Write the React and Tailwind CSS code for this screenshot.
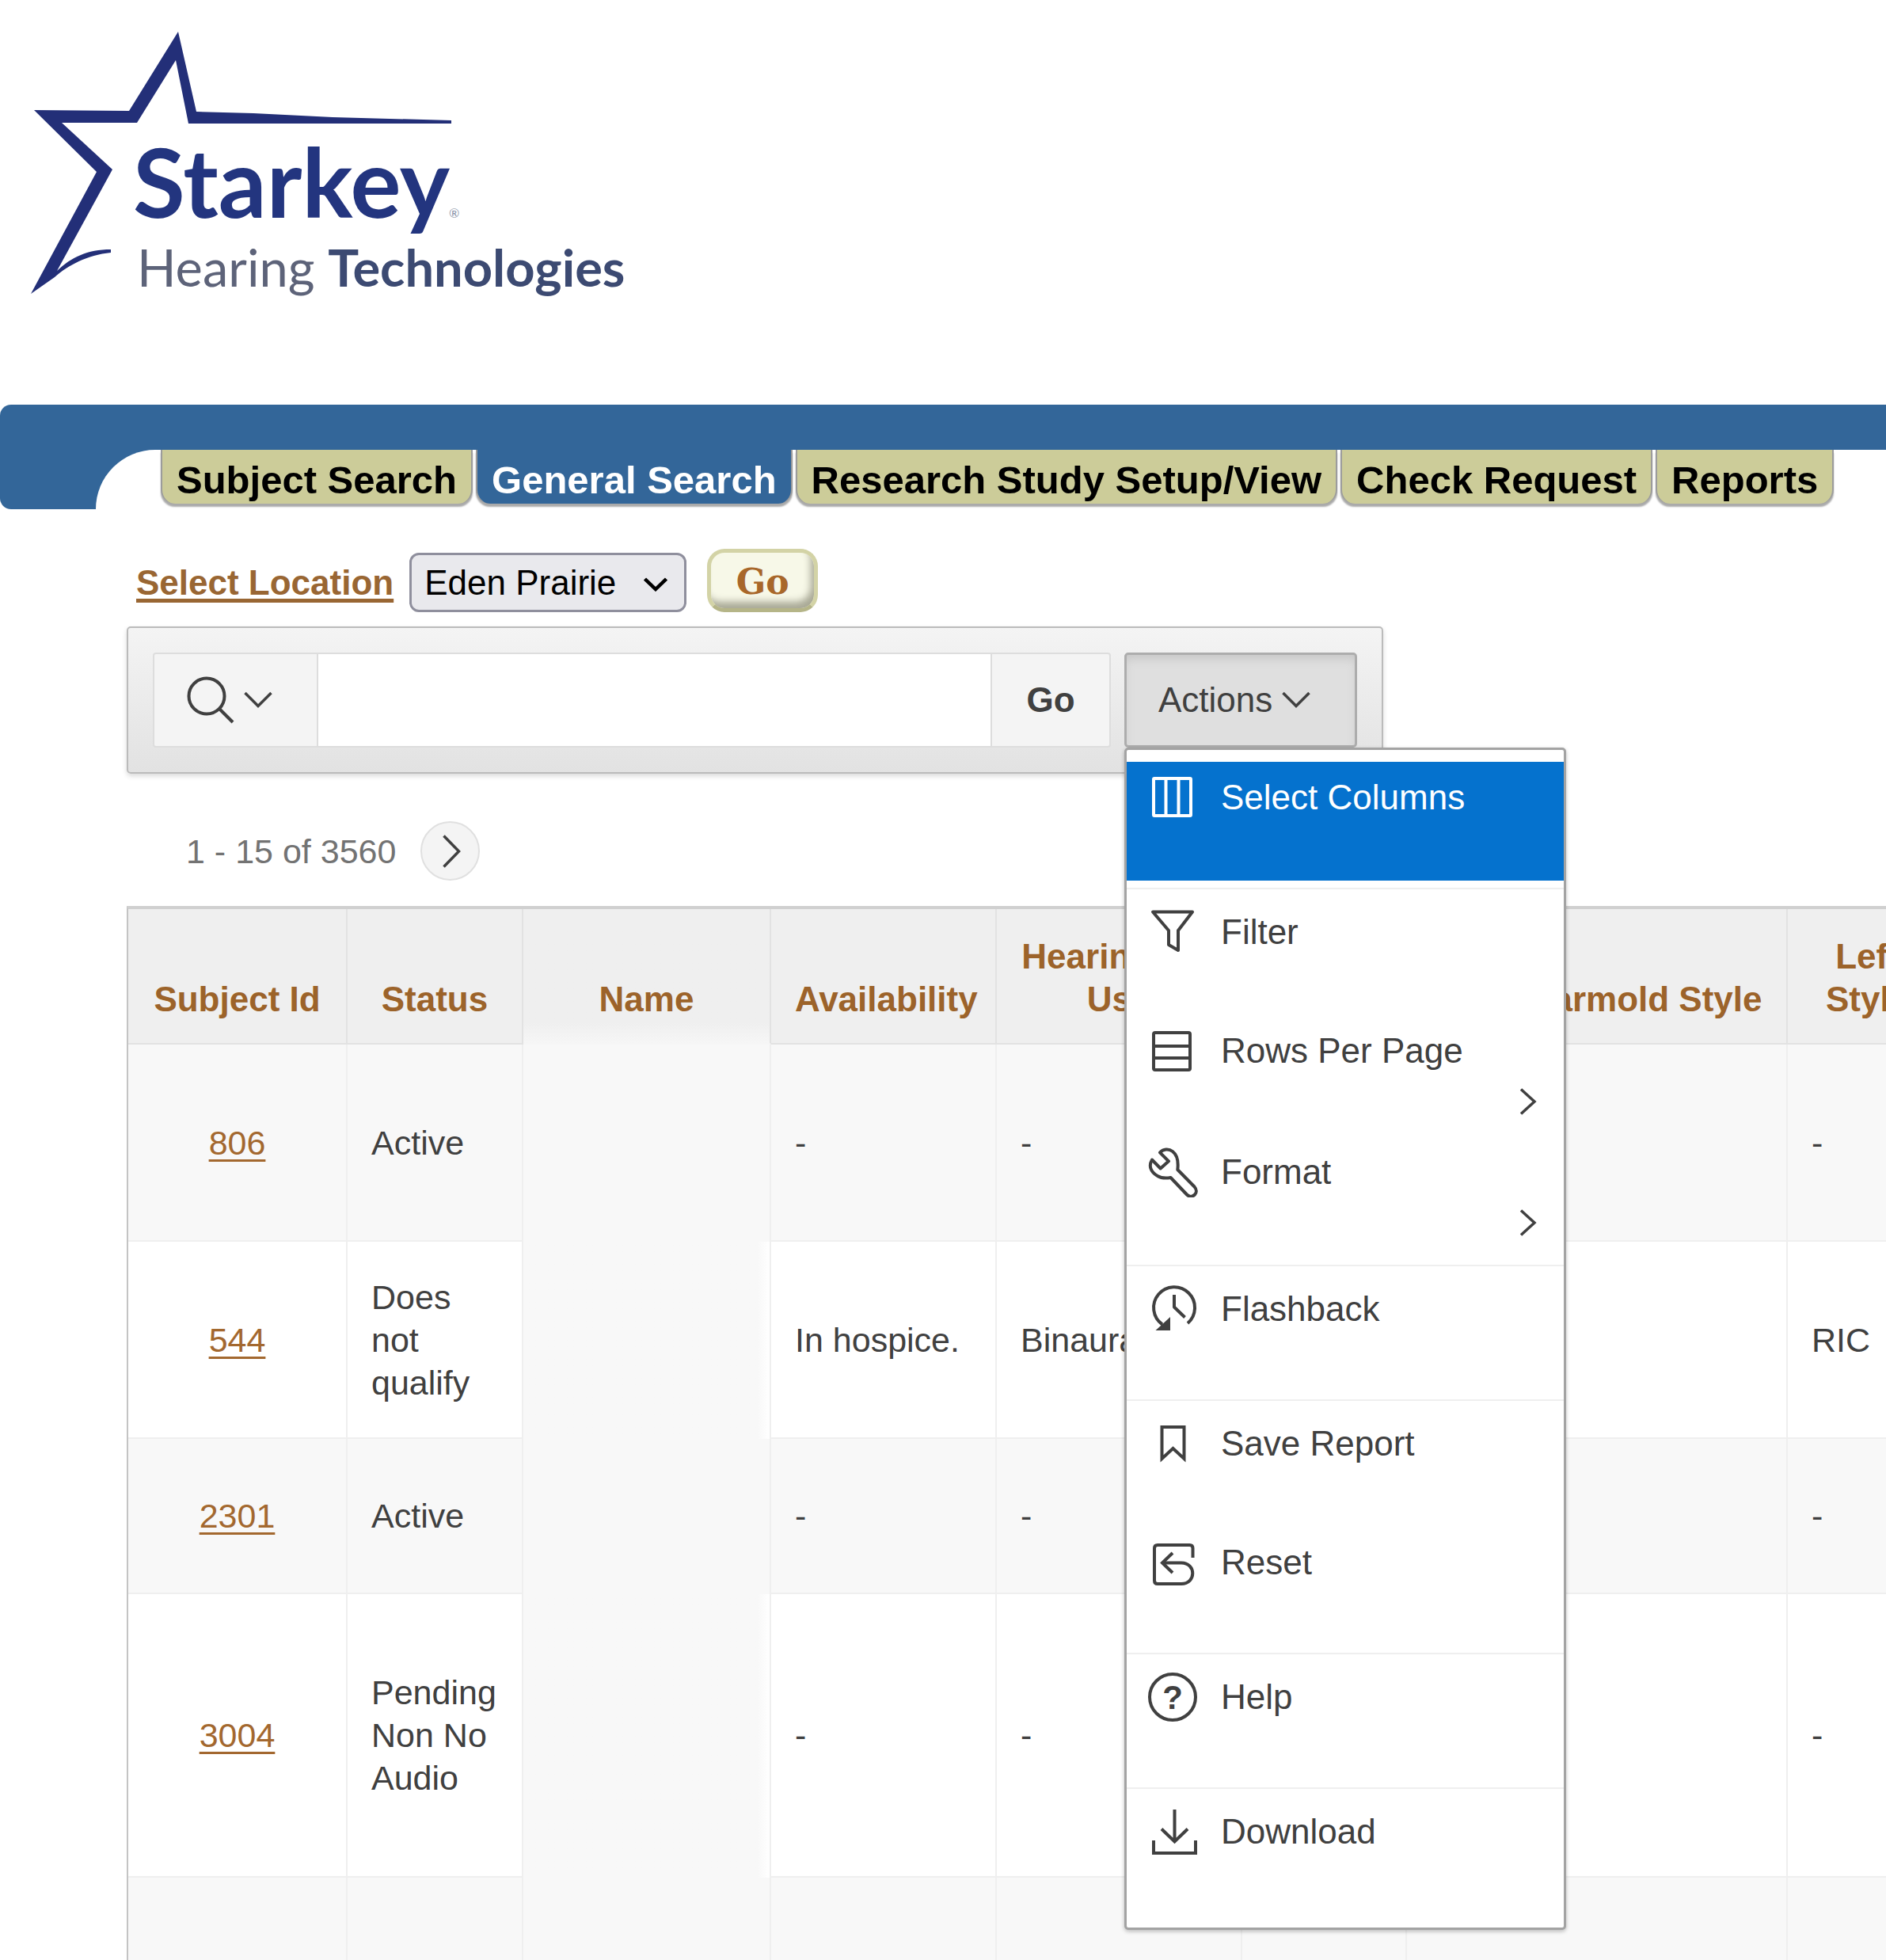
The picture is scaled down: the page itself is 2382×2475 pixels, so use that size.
import React from "react";

const TABS = [
  { label: "Subject Search" },
  { label: "General Search", current: true },
  { label: "Research Study Setup/View" },
  { label: "Check Request" },
  { label: "Reports" },
];

const COLUMNS = [
  { key: "id", label: "Subject Id", col: "w-[277px]" },
  { key: "status", label: "Status", col: "w-[222px]" },
  { key: "name", label: "Name", col: "w-[313px]" },
  { key: "availability", label: "Availability", col: "w-[285px]" },
  { key: "use", label: "Hearing Aid Use", col: "w-[310px]" },
  { key: "side", label: "", col: "w-[208px]" },
  { key: "right", label: "Right Earmold Style", col: "w-[481px]" },
  { key: "left", label: "Left Style", col: "w-[203px]" },
];

const ROWS = [
  { id: "806", status: "Active", availability: "-", use: "-", left: "-", height: "h-[249px]" },
  { id: "544", status: "Does not qualify", availability: "In hospice.", use: "Binaural", left: "RIC", height: "h-[249px]" },
  { id: "2301", status: "Active", availability: "-", use: "-", left: "-", height: "h-[196px]" },
  { id: "3004", status: "Pending Non No Audio", availability: "-", use: "-", left: "-", height: "h-[358px]" },
  { id: "", status: "", availability: "", use: "", left: "", height: "h-[106px]" },
];

function Chevron({ d, className, viewBox }) {
  return (
    <svg viewBox={viewBox} className={className} fill="none" stroke="currentColor" strokeWidth="3.5" aria-hidden="true">
      <path d={d} />
    </svg>
  );
}

function Down({ className = "h-[22px] w-9" }) {
  return <Chevron viewBox="0 0 36 22" d="M1.5 2 18 18.500 34.500 2" className={className} />;
}

function MenuIcon({ children }) {
  return (
    <svg
      viewBox="0 0 64 64"
      className="h-16 w-16 shrink-0"
      fill="none"
      stroke="currentColor"
      strokeWidth="4"
      strokeLinejoin="round"
      aria-hidden="true"
    >
      {children}
    </svg>
  );
}

const ICONS = {
  columns: (
    <>
      <rect x="8" y="8" width="47" height="47" rx="1" />
      <path d="M23.500 8V55M39.500 8V55" />
    </>
  ),
  filter: <path d="M7 6.500H57L39 30V55L27 48V30Z" />,
  rows: (
    <>
      <rect x="8" y="9" width="46" height="47" rx="2" />
      <path d="M8 26H54M8 41H54" />
    </>
  ),
  wrench: (
    <path d="M6 16.500 16.700 27.500 27 18.300 16 7.300C20 3 27 2 32 6 38.500 11 39.500 19 38.300 29L59.500 50.500C62.500 54 62.500 58 60 60.500 57 63.500 53 63.500 50 60.500L29.500 39C24 40 18 40 13 37 4 32 1.500 24 6 16.500Z" />
  ),
  flashback: (
    <>
      <path d="M19 51.500A26 26 0 1 1 51 50" />
      <path d="M34 14V29.500L47.500 42.500" />
      <path d="M10.500 59H29V42Z" fill="currentColor" stroke="none" />
    </>
  ),
  bookmark: <path d="M18.500 11H46.500V51L32.500 38 18.500 51Z" strokeLinejoin="miter" />,
  reset: (
    <>
      <path d="M57.500 26V14Q57.500 10 53.500 10H13Q9 10 9 14V55Q9 59 13 59H43C62 59 62 32.500 43 32.500H19" />
      <path d="M32 20 19 32.500 32 45" strokeLinejoin="miter" />
    </>
  ),
  help: (
    <>
      <circle cx="32" cy="32" r="29" />
      <text
        x="32"
        y="47"
        textAnchor="middle"
        fill="currentColor"
        stroke="none"
        className="font-['Liberation_Sans',sans-serif] text-[42px] font-bold"
      >
        ?
      </text>
    </>
  ),
  download: (
    <>
      <path d="M8 43V59H61V43" strokeLinejoin="miter" />
      <path d="M34.500 4V44M18 28.500 34.500 44.500 51 28.500" strokeLinejoin="miter" />
    </>
  ),
};

const MENU = [
  [{ label: "Select Columns", icon: "columns", active: true }],
  [
    { label: "Filter", icon: "filter" },
    { label: "Rows Per Page", icon: "rows", sub: true },
    { label: "Format", icon: "wrench", sub: true },
  ],
  [{ label: "Flashback", icon: "flashback" }],
  [
    { label: "Save Report", icon: "bookmark" },
    { label: "Reset", icon: "reset" },
  ],
  [{ label: "Help", icon: "help" }],
  [{ label: "Download", icon: "download" }],
];

function ActionsMenu() {
  return (
    <div
      role="menu"
      className="absolute left-0 top-full z-10 w-[558px] rounded-[5px] border-[3px] border-[#a3a3a3] bg-white pb-4 pt-[15px] shadow-[0_2px_5px_rgba(0,0,0,0.25)]"
    >
      {MENU.map((group, g) => (
        <React.Fragment key={g}>
          {g > 0 && <hr className="my-[9px] border-t-2 border-[#efefef]" />}
          {group.map((item) => (
            <button
              key={item.label}
              type="button"
              role="menuitem"
              className={
                "relative flex w-full items-start gap-[29px] pl-[26px] pt-[13px] text-left text-[44px] leading-[64px] " +
                (item.sub ? "h-[153px] " : "h-[150px] ") +
                (item.active ? "bg-[#0572ce] text-white" : "text-[#404040]")
              }
            >
              <MenuIcon>{ICONS[item.icon]}</MenuIcon>
              <span className="whitespace-nowrap">{item.label}</span>
              {item.sub && (
                <Chevron
                  viewBox="0 0 22 34"
                  d="M2 1.500 19 17 2 32.500"
                  className="absolute right-[34px] top-[92px] h-[34px] w-[22px]"
                />
              )}
            </button>
          ))}
        </React.Fragment>
      ))}
    </div>
  );
}

function Logo() {
  return (
    <svg viewBox="0 0 820 400" className="h-[400px] w-[820px]" role="img" aria-label="Starkey Hearing Technologies">
      <path
        fill="#232f78"
        d="M225 40 248 141 320 143 420 148 570 152V156H238L222 76 173 155H78L142 214 72 342C90 325 110 315 140 315V319C110 322 86 335 69 350L39 371 122 217 43 139 163 140Z"
      />
      <text x="168" y="275" fill="#23357f" className="font-[Lato,sans-serif] text-[120px] font-bold">
        Starkey
      </text>
      <text x="567" y="275" fill="#8a93a8" className="font-[Lato,sans-serif] text-[16px]">
        ®
      </text>
      <text x="173" y="362" className="font-[Lato,sans-serif] text-[65px]">
        <tspan fill="#5d6379">Hearing </tspan>
        <tspan fill="#3c4a72" className="font-bold">
          Technologies
        </tspan>
      </text>
    </svg>
  );
}

function cellContent(row, key) {
  if (key === "id" && row.id) {
    return (
      <a href="#subject" className="text-[#a3682f] underline decoration-[3px] underline-offset-[6px]">
        {row.id}
      </a>
    );
  }
  return row[key];
}

export default function App() {
  return (
    <div className="min-h-screen overflow-hidden bg-white font-['Liberation_Sans',Arial,sans-serif] text-[#404040]">
      <header className="h-[511px]">
        <Logo />
      </header>

      <div className="h-[57px] rounded-tl-[14px] bg-[#336699]" />
      <div className="flex h-[75px]">
        <div className="w-[203px] shrink-0 rounded-bl-[14px] bg-[#336699] pl-[121px]">
          <div className="h-full rounded-tl-[75px] bg-white" />
        </div>
        <nav className="flex items-start gap-1">
          {TABS.map((tab) => (
            <a
              key={tab.label}
              href="#tab"
              className={
                "whitespace-nowrap rounded-b-[18px] border-x-2 border-[#9c9c9c] px-[18px] pt-2 text-[49px] font-bold leading-[60px] shadow-[0_4px_2px_0_#aaaaaa] " +
                (tab.current ? "bg-[#336699] text-white" : "bg-[#cccc99] text-black")
              }
            >
              {tab.label}
            </a>
          ))}
        </nav>
      </div>

      <main className="pl-40">
        <div className="mt-[50px] flex items-end pl-3">
          <label
            htmlFor="location"
            className="mr-5 text-[44px] font-bold leading-[75px] text-[#996633] underline decoration-[5px] underline-offset-[5px]"
          >
            Select Location
          </label>
          <div className="relative mr-[26px]">
            <select
              id="location"
              className="h-[75px] w-[350px] appearance-none rounded-[12px] border-[3px] border-[#8f8f9d] bg-[#e9e9ed] pl-[16px] text-[44px] leading-[69px] text-black"
            >
              <option>Eden Prairie</option>
            </select>
            <svg
              viewBox="0 0 30 18"
              className="pointer-events-none absolute right-6 top-[31px] h-[18px] w-[30px]"
              fill="none"
              stroke="#000"
              strokeWidth="4.5"
              aria-hidden="true"
            >
              <path d="M1.500 2 15 15 28.500 2" />
            </svg>
          </div>
          <button
            type="button"
            className="h-20 w-[140px] rounded-[22px] border-[5px] border-[#d3d3a6] border-b-[#b5b588] bg-[#f7f8e8] pt-1 font-['DejaVu_Serif',serif] text-[44px] font-bold leading-[60px] text-[#a8672a] shadow-[inset_-6px_-10px_10px_-2px_#a9a996]"
          >
            Go
          </button>
        </div>

        <div className="mt-[18px] flex w-fit gap-[17px] rounded-[5px] border-2 border-[#bbbbbb] bg-linear-to-b from-[#f4f4f4] to-[#e2e2e2] p-[31px] shadow-[0_3px_6px_rgba(0,0,0,0.15)]">
          <div className="flex h-[120px]">
            <button
              type="button"
              aria-label="Select columns to search"
              className="flex w-[209px] items-center gap-3 rounded-l-[4px] border-2 border-[#dddddd] bg-[#f4f4f4] pl-[41px]"
            >
              <svg viewBox="0 0 60 60" className="h-[60px] w-[60px]" fill="none" stroke="currentColor" strokeWidth="4" aria-hidden="true">
                <circle cx="25" cy="25" r="22.500" />
                <path d="M41 41 58 58" />
              </svg>
              <Down />
            </button>
            <input
              type="text"
              aria-label="Search"
              className="w-[849px] border-y-2 border-[#dddddd] bg-white px-4 text-[44px] outline-none"
            />
            <button
              type="button"
              className="w-[152px] rounded-r-[4px] border-2 border-[#dddddd] bg-[#f4f4f4] text-[44px] font-bold"
            >
              Go
            </button>
          </div>
          <div className="relative">
            <button
              type="button"
              aria-haspopup="menu"
              aria-expanded="true"
              className="flex h-[120px] w-[294px] items-center gap-3 rounded-[5px] border-[3px] border-[#adadad] bg-[#dfdfdf] pl-10 text-[44px] shadow-[inset_0_8px_14px_-4px_#c4c4c4]"
            >
              Actions
              <Down />
            </button>
            <ActionsMenu />
          </div>
        </div>

        <div className="mb-8 mt-[60px] flex items-center gap-[31px] pl-[75px]">
          <span className="text-[43px] leading-[54px] text-[#737373]">1 - 15 of 3560</span>
          <button
            type="button"
            aria-label="Next page"
            className="flex h-[75px] w-[75px] items-center justify-center rounded-full border-2 border-[#e0e0e0] bg-[#f4f4f4] pl-1"
          >
            <Chevron viewBox="0 0 26 42" d="M2.500 1.500 21.500 21 2.500 40.500" className="h-[42px] w-[26px]" />
          </button>
        </div>

        <div className="overflow-hidden">
          <table className="w-[2299px] table-fixed border-separate border-spacing-0 border-l-2 border-t-[4px] border-l-[#c4c4c4] border-t-[#d0d0d0] leading-[54px]">
            <colgroup>
              {COLUMNS.map((c) => (
                <col key={c.key} className={c.col} />
              ))}
            </colgroup>
            <thead>
              <tr>
                {COLUMNS.map((c) => (
                  <th
                    key={c.key}
                    scope="col"
                    className={
                      "h-[171px] border-b-2 border-r-2 px-[30px] pb-7 text-center align-bottom text-[44px] font-bold text-[#9c632a] " +
                      (c.key === "name"
                        ? "border-b-[#f6f6f6] border-r-[#e2e2e2] bg-linear-to-b from-[#efefef] from-85% to-[#f6f6f6]"
                        : "border-[#e2e2e2] bg-[#efefef]")
                    }
                  >
                    {c.label}
                  </th>
                ))}
              </tr>
            </thead>
            <tbody>
              {ROWS.map((row, i) => (
                <tr key={i} className={row.height}>
                  {COLUMNS.map((c) => (
                    <td
                      key={c.key}
                      className={
                        "border-r-2 border-[#efefef] pl-[30px] align-middle text-[43px] " +
                        (c.key === "id" ? "pr-[30px] text-center " : "pr-5 ") +
                        (c.key === "name"
                          ? i % 2
                            ? "bg-linear-to-r from-[#f8f8f8] from-95% to-white"
                            : "bg-[#f8f8f8]"
                          : i % 2
                            ? "border-b-2 bg-white"
                            : "border-b-2 bg-[#f8f8f8]")
                      }
                    >
                      {cellContent(row, c.key)}
                    </td>
                  ))}
                </tr>
              ))}
            </tbody>
          </table>
        </div>
      </main>
    </div>
  );
}
